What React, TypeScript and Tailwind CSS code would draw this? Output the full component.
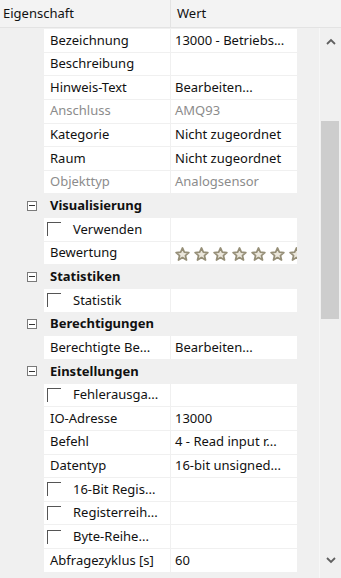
import React from "react";

type Row =
  | { kind: "cat"; label: string }
  | { kind: "prop"; label: string; value?: string; muted?: boolean; check?: boolean; stars?: boolean };

const rows: Row[] = [
  { kind: "prop", label: "Bezeichnung", value: "13000 - Betriebs..." },
  { kind: "prop", label: "Beschreibung", value: "" },
  { kind: "prop", label: "Hinweis-Text", value: "Bearbeiten..." },
  { kind: "prop", label: "Anschluss", value: "AMQ93", muted: true },
  { kind: "prop", label: "Kategorie", value: "Nicht zugeordnet" },
  { kind: "prop", label: "Raum", value: "Nicht zugeordnet" },
  { kind: "prop", label: "Objekttyp", value: "Analogsensor", muted: true },
  { kind: "cat", label: "Visualisierung" },
  { kind: "prop", label: "Verwenden", check: true },
  { kind: "prop", label: "Bewertung", stars: true },
  { kind: "cat", label: "Statistiken" },
  { kind: "prop", label: "Statistik", check: true },
  { kind: "cat", label: "Berechtigungen" },
  { kind: "prop", label: "Berechtigte Be...", value: "Bearbeiten..." },
  { kind: "cat", label: "Einstellungen" },
  { kind: "prop", label: "Fehlerausga...", check: true },
  { kind: "prop", label: "IO-Adresse", value: "13000" },
  { kind: "prop", label: "Befehl", value: "4 - Read input r..." },
  { kind: "prop", label: "Datentyp", value: "16-bit unsigned..." },
  { kind: "prop", label: "16-Bit Regis...", check: true },
  { kind: "prop", label: "Registerreih...", check: true },
  { kind: "prop", label: "Byte-Reihe...", check: true },
  { kind: "prop", label: "Abfragezyklus [s]", value: "60" }
];

function Star() {
  return (
    <svg width="15" height="14" viewBox="0 0 24 23" className="shrink-0">
      <path
        d="M12 1.5l3 7 7.5.6-5.7 4.9 1.8 7.4L12 17.4l-6.6 4 1.8-7.4L1.5 9.1 9 8.5z"
        fill="#ebe7dc"
        stroke="#968f78"
        strokeWidth="2.8"
        strokeLinejoin="round"
      />
    </svg>
  );
}

function Collapse() {
  return (
    <span className="flex h-[10px] w-[10px] items-center justify-center border border-[#7a7a7a] bg-white">
      <span className="h-px w-[6px] bg-[#333]" />
    </span>
  );
}

function Check() {
  return <span className="h-[14px] w-[14px] shrink-0 border-l-[1.5px] border-t-[1.5px] border-[#555] bg-white" />;
}

export default function App() {
  return (
    <div className="flex h-[578px] w-[341px] flex-col overflow-hidden bg-[#f0f0f0] text-[13px] text-black" style={{ fontFamily: '"Noto Sans", "Segoe UI", sans-serif' }}>
      <div className="flex h-[28px] shrink-0 border-b border-[#e3e3e3] bg-[#f3f3f3] text-[#111]">
        <div className="flex w-[171px] items-center border-r border-[#e3e3e3] pl-[3px]">Eigenschaft</div>
        <div className="flex items-center pl-[6px]">Wert</div>
      </div>
      <div className="flex flex-1">
        <div className="flex w-[297px] flex-col gap-px pt-px">
          {rows.map((r, i) =>
            r.kind === "cat" ? (
              <div key={i} className="flex h-[22.65px] items-center">
                <div className="flex w-[44px] justify-end pr-[7px]">
                  <Collapse />
                </div>
                <span className="pl-[6px] font-bold text-[#111]">{r.label}</span>
              </div>
            ) : (
              <div key={i} className="flex h-[22.65px]">
                <div className="w-[44px]" />
                <div className="flex w-[126px] items-center overflow-hidden whitespace-nowrap bg-white pl-[6px]">
                  {r.check ? (
                    <>
                      <span className="ml-[-3px] flex items-center">
                        <Check />
                      </span>
                      <span className="pl-[12px] text-[#111]">{r.label}</span>
                    </>
                  ) : (
                    <span className={r.muted ? "text-[#8c8c8c]" : "text-[#111]"}>{r.label}</span>
                  )}
                </div>
                <div className="ml-px flex w-[126px] items-center overflow-hidden whitespace-nowrap bg-white pl-[4px]">
                  {r.stars ? (
                    <div className="flex gap-[4px] pt-px">
                      {Array.from({ length: 7 }).map((_, j) => (
                        <Star key={j} />
                      ))}
                    </div>
                  ) : (
                    <span className={r.muted ? "text-[#8c8c8c]" : "text-[#111]"}>{r.value}</span>
                  )}
                </div>
              </div>
            )
          )}
        </div>
        <div className="w-[22px]" />
        <div className="flex w-[22px] flex-col border-l border-[#f7f7f7] bg-[#f0f0f0] pb-[8px]">
          <div className="flex h-[24px] items-center justify-center pt-[2px]">
            <svg width="10" height="7" viewBox="0 0 10 7">
              <path d="M1 6l4-4 4 4" fill="none" stroke="#606060" strokeWidth="1.8" />
            </svg>
          </div>
          <div className="mt-[69px] ml-px h-[198px] w-[18px] bg-[#cdcdcd]" />
          <div className="flex-1" />
          <div className="flex h-[20px] items-center justify-center">
            <svg width="10" height="7" viewBox="0 0 10 7">
              <path d="M1 1l4 4 4-4" fill="none" stroke="#606060" strokeWidth="1.8" />
            </svg>
          </div>
        </div>
      </div>
    </div>
  );
}
